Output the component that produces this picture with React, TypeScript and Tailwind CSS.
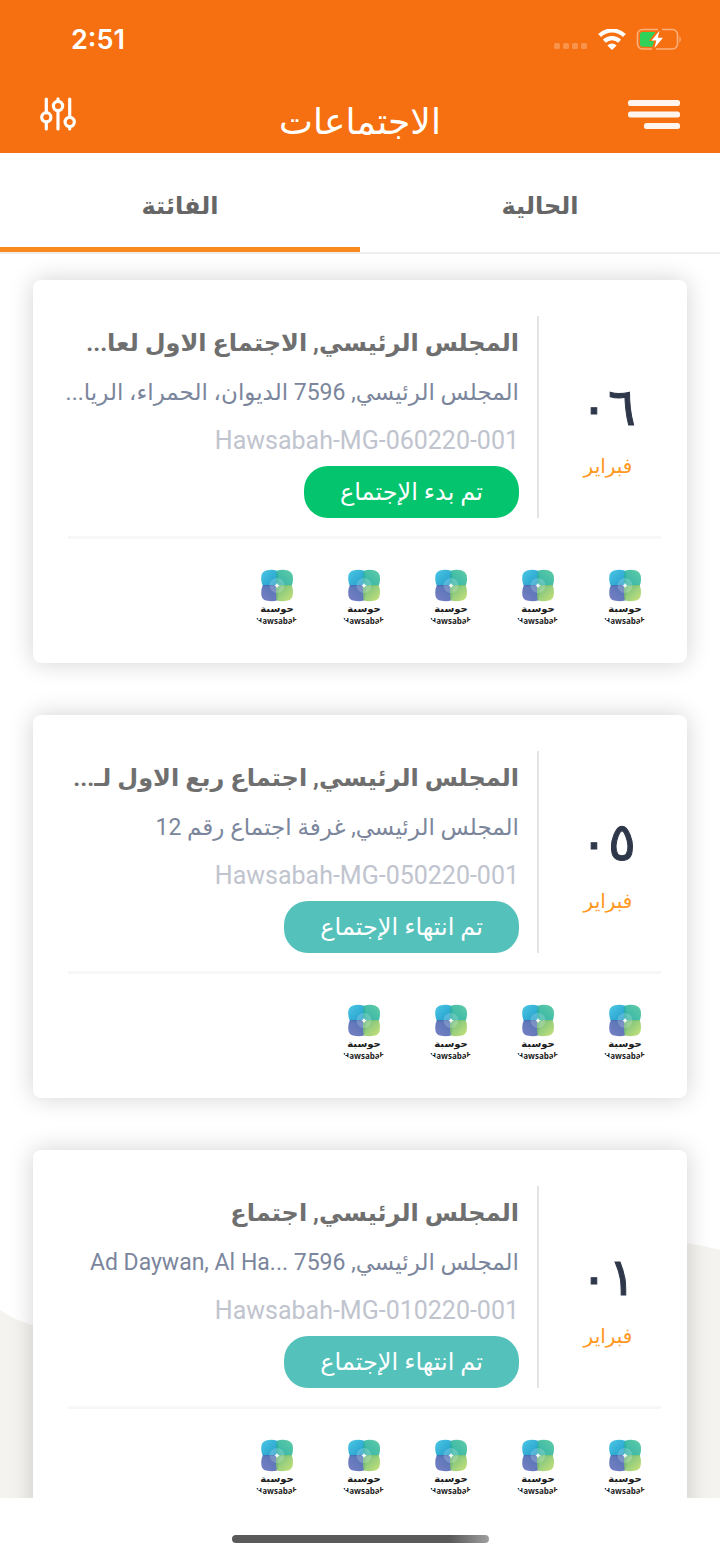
import { useState } from "react"
import clsx from "clsx"

type Meeting = {
  day: string
  month: string
  title: string
  place: string
  code: string
  status: "started" | "ended"
  attendees: number
}

const meetings: Meeting[] = [
  {
    day: "٠٦",
    month: "فبراير",
    title: "المجلس الرئيسي, الاجتماع الاول لعا...",
    place: "المجلس الرئيسي, 7596 الديوان، الحمراء، الريا...",
    code: "Hawsabah-MG-060220-001",
    status: "started",
    attendees: 5,
  },
  {
    day: "٠٥",
    month: "فبراير",
    title: "المجلس الرئيسي, اجتماع ربع الاول لـ...",
    place: "المجلس الرئيسي, غرفة اجتماع رقم 12",
    code: "Hawsabah-MG-050220-001",
    status: "ended",
    attendees: 4,
  },
  {
    day: "٠١",
    month: "فبراير",
    title: "المجلس الرئيسي, اجتماع",
    // trailing LRM keeps the dots on the latin side
    place: "المجلس الرئيسي, 7596 Ad Daywan, Al Ha...\u200E",
    code: "Hawsabah-MG-010220-001",
    status: "ended",
    attendees: 5,
  },
]

const statusLabel = {
  started: "تم بدء الإجتماع",
  ended: "تم انتهاء الإجتماع",
}

const tabs = [
  { id: "current", label: "الحالية" },
  { id: "past", label: "الفائتة" },
]

function StatusBar() {
  return (
    <div dir="ltr" className="flex h-20 items-center justify-between pr-[38px] pl-[71px]">
      <span className="font-['Inter'] text-[27px] font-semibold text-white">2:51</span>
      <div className="flex items-center gap-[10px]">
        <svg width="34" height="24" viewBox="0 0 34 24" fill="#fff" fillOpacity="0.25">
          <rect x="0" y="15" width="6" height="6" rx="1.5" />
          <rect x="9" y="15" width="6" height="6" rx="1.5" />
          <rect x="18" y="15" width="6" height="6" rx="1.5" />
          <rect x="27" y="15" width="6" height="6" rx="1.5" />
        </svg>
        <svg width="28" height="22" viewBox="0 0 28 22" fill="none" stroke="#fff" strokeWidth="4.2">
          <path d="M1.6 6.6A17.6 17.6 0 0 1 26.4 6.6" />
          <path d="M6.4 12.2A10.8 10.8 0 0 1 21.6 12.2" />
          <path d="M14 21L9.400 16.500A6.500 6.500 0 0 1 18.600 16.500Z" fill="#fff" stroke="none" />
        </svg>
        <svg width="46" height="24" viewBox="0 0 46 24">
          <g fill="none" stroke="#fff" strokeOpacity="0.45" strokeWidth="1.6">
            <path d="M22 1.500H6.500A5 5 0 0 0 1.500 6.500V16A5 5 0 0 0 6.500 21H16" />
            <path d="M26 1.500H36.500A5 5 0 0 1 41.500 6.500V16A5 5 0 0 1 36.500 21H20" />
          </g>
          <path d="M43.500 8Q46 11 43.500 15Z" fill="#fff" fillOpacity="0.5" />
          <path d="M6.500 4H19.500L13.500 12.300V13H18L16.500 18.700H6.500A2.500 2.500 0 0 1 4 16.200V6.500A2.500 2.500 0 0 1 6.500 4Z" fill="#30d158" />
          <path d="M23.500 2.700L15.500 12.500H20.300L18.500 20L27 9.800H21.800Z" fill="#fff" />
        </svg>
      </div>
    </div>
  )
}

function MenuIcon() {
  return (
    <svg width="52" height="30" viewBox="0 0 52 30" fill="#fff" fillOpacity="0.93">
      <rect x="0" y="0" width="52" height="6" rx="2.5" />
      <rect x="0" y="11.5" width="52" height="6" rx="2.5" />
      <rect x="16" y="23" width="36" height="6" rx="2.5" />
    </svg>
  )
}

function FilterIcon() {
  return (
    <svg width="36" height="34" viewBox="0 0 36 34" fill="none" stroke="#fff" strokeWidth="3.2" strokeLinecap="round">
      <path d="M6.300 2V14.500M6.300 26V32M18 1.800V4M18 14.500V32M29.700 2V19M29.700 31V32" />
      <circle cx="6.3" cy="20.3" r="4.6" />
      <circle cx="18" cy="9" r="4.6" />
      <circle cx="29.7" cy="25" r="4.6" />
    </svg>
  )
}

function LogoDefs() {
  return (
    <svg width="0" height="0" className="absolute" aria-hidden="true">
      <defs>
        <linearGradient id="leaf-blue" x1="0" y1="0" x2="1" y2="1">
          <stop offset="0" stopColor="#4cc8e6" />
          <stop offset="1" stopColor="#1f98c6" />
        </linearGradient>
        <linearGradient id="leaf-green" x1="1" y1="0" x2="0" y2="1">
          <stop offset="0" stopColor="#4ec79c" />
          <stop offset="1" stopColor="#1ba8a0" />
        </linearGradient>
        <linearGradient id="leaf-purple" x1="0" y1="1" x2="1" y2="0">
          <stop offset="0" stopColor="#6a72bf" />
          <stop offset="1" stopColor="#3c63a8" />
        </linearGradient>
        <linearGradient id="leaf-lime" x1="1" y1="1" x2="0" y2="0">
          <stop offset="0" stopColor="#c5e06a" />
          <stop offset="1" stopColor="#5cb574" />
        </linearGradient>
      </defs>
    </svg>
  )
}

function Avatar() {
  return (
    <svg width="60" height="60" viewBox="0 0 60 60" className="rounded-full" role="img" aria-label="Hawsabah">
      <path d="M19 3.500Q25 2 30 3.800Q31.800 5 31.600 19.200H16Q13.500 14 14.500 8Q15.500 4.500 19 3.500Z" fill="url(#leaf-blue)" />
      <path d="M41 3.500Q35 2 30 3.800Q28.800 5 29 19.200H44.500Q46.800 14 45.600 8Q44.500 4.500 41 3.500Z" fill="url(#leaf-green)" fillOpacity="0.9" />
      <path d="M19 33.500Q25 35 30 33.600Q31.800 32 31.600 18H16Q13.500 23 14.500 29Q15.500 32.800 19 33.500Z" fill="url(#leaf-purple)" fillOpacity="0.9" />
      <path d="M41 33.500Q35 35 30 33.600Q28.800 32 29 18H44.500Q46.800 23 45.600 29Q44.500 32.800 41 33.500Z" fill="url(#leaf-lime)" fillOpacity="0.9" />
      <circle cx="30" cy="18.500" r="7.500" fill="#fff" fillOpacity="0.2" />
      <path d="M30 16L31 17.600L32.500 18.600L31 19.600L30 21.200L29 19.600L27.500 18.600L29 17.600Z" fill="#fff" fillOpacity="0.9" />
      <text x="30" y="45" textAnchor="middle" fontSize="10" fontWeight="700" fill="#1c1c1c" direction="rtl" className="font-['DejaVu_Sans',sans-serif]">
        حوسبة
      </text>
      <text x="30" y="57" textAnchor="middle" fontSize="8" fontWeight="700" fill="#1c1c1c" direction="ltr" className="font-['Open_Sans',sans-serif]">
        Hawsabah
      </text>
    </svg>
  )
}

function MeetingCard({ meeting }: { meeting: Meeting }) {
  return (
    <article className="rounded-lg bg-white pt-9 pr-[26px] pb-9 pl-[35px] shadow-[0_0_24px_rgba(0,0,0,0.18)]">
      <div className="flex">
        <div className="flex w-[122px] shrink-0 flex-col items-center pt-[60px] pl-4">
          <div className="text-[52px] leading-[64px] text-[#2f384a] [-webkit-text-stroke:1px_#2f384a]">{meeting.day}</div>
          <div className="text-[20px] leading-[52px] text-[#ff981f]">{meeting.month}</div>
        </div>
        <div className="w-[2px] shrink-0 bg-[#e4e4e4]" />
        <div className="min-w-0 flex-1 pr-[18px]">
          <h2 className="text-[24px] leading-[54px] font-bold whitespace-nowrap text-[#6f6f6f]">{meeting.title}</h2>
          <p className="text-[23px] leading-[46px] whitespace-nowrap text-[#7b869c]">{meeting.place}</p>
          <p className="text-[25px] leading-[50px] text-[#c0c4ce]">{meeting.code}</p>
          <span
            className={clsx(
              "inline-flex h-[52px] items-center rounded-3xl px-9 pb-px text-[24px] text-white",
              meeting.status === "started" ? "bg-[#04c46e]" : "bg-[#54c1bb]",
            )}
          >
            {statusLabel[meeting.status]}
          </span>
        </div>
      </div>
      <div className="mt-[18px] h-[3px] bg-[#f7f7f7]" />
      <div className="mt-7 flex gap-[27px] pr-[6px]">
        {Array.from({ length: meeting.attendees }, (_, i) => (
          <Avatar key={i} />
        ))}
      </div>
    </article>
  )
}

export default function App() {
  const [activeTab, setActiveTab] = useState("past")

  return (
    <div dir="rtl" className="flex h-screen flex-col bg-white font-['Roboto','DejaVu_Sans',sans-serif]">
      <LogoDefs />
      <header className="bg-[#f66f10]">
        <StatusBar />
        <div className="flex h-[73px] items-start justify-between px-10 pt-4">
          <button aria-label="القائمة" className="pt-1">
            <MenuIcon />
          </button>
          <h1 className="text-[36px] leading-[52px] text-white">الاجتماعات</h1>
          <button aria-label="تصفية" className="flex w-[52px] justify-end pt-px">
            <FilterIcon />
          </button>
        </div>
      </header>

      <div role="tablist" className="flex h-[101px] shrink-0 border-b-2 border-[#eeeeee]">
        {tabs.map((tab) => (
          <button
            key={tab.id}
            role="tab"
            aria-selected={activeTab === tab.id}
            onClick={() => setActiveTab(tab.id)}
            className={clsx(
              "flex-1 border-b-[5px] pt-3 text-[24px] font-bold text-[#666666]",
              activeTab === tab.id ? "border-[#fb8a1e]" : "border-transparent",
            )}
          >
            {tab.label}
          </button>
        ))}
      </div>

      <main className="relative min-h-0 flex-1 overflow-hidden">
        <svg
          className="absolute bottom-0 left-0 h-[260px] w-full"
          viewBox="0 0 720 260"
          preserveAspectRatio="none"
          aria-hidden="true"
        >
          <path d="M0 72Q16 83 33 87C250 130 450 -40 687 5Q705 8 720 12V260H0Z" fill="#f4f3ef" />
        </svg>
        <div className="relative flex h-full flex-col gap-[52px] overflow-y-auto px-[33px] pt-[26px] [scrollbar-width:none]">
          {meetings.map((meeting) => (
            <MeetingCard key={meeting.code} meeting={meeting} />
          ))}
        </div>
      </main>

      <footer className="flex h-[60px] shrink-0 justify-center pt-[37px]">
        <div className="h-2 w-[257px] rounded-full bg-linear-to-r from-[#5a5a5a] from-85% to-[#a0a0a0]" />
      </footer>
    </div>
  )
}
